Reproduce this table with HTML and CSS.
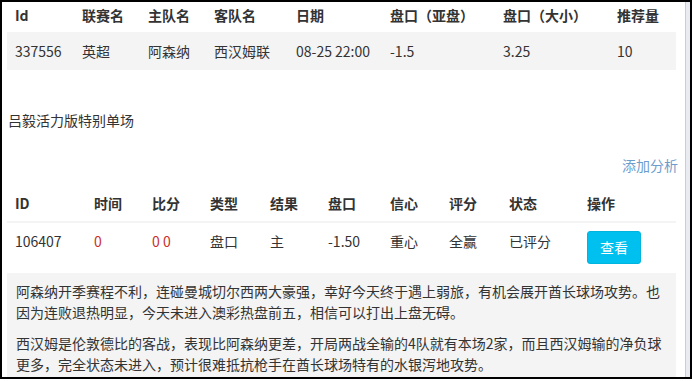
FILE: index.html
```html
<!DOCTYPE html>
<html lang="zh-CN">
<head>
<meta charset="utf-8">
<title>单场推荐</title>
<link rel="stylesheet" href="styles.css">
</head>
<body>
<div class="window">
  <div class="page">
    <table class="tbl tbl-match">
      <colgroup>
        <col class="w67"><col class="w66"><col class="w66"><col class="w82">
        <col class="w94"><col class="w113"><col class="w114"><col class="w67">
      </colgroup>
      <thead>
        <tr><th>Id</th><th>联赛名</th><th>主队名</th><th>客队名</th><th>日期</th><th>盘口（亚盘）</th><th>盘口（大小）</th><th>推荐量</th></tr>
      </thead>
      <tbody>
        <tr><td>337556</td><td>英超</td><td>阿森纳</td><td>西汉姆联</td><td>08-25 22:00</td><td>-1.5</td><td>3.25</td><td>10</td></tr>
      </tbody>
    </table>

    <div class="title">吕毅活力版特别单场</div>
    <div class="actions"><a class="link" href="#">添加分析</a></div>

    <table class="tbl tbl-analysis">
      <colgroup>
        <col class="w79"><col class="w58"><col class="w58"><col class="w60"><col class="w58">
        <col class="w62"><col class="w59"><col class="w60"><col class="w78"><col class="w97">
      </colgroup>
      <thead>
        <tr><th>ID</th><th>时间</th><th>比分</th><th>类型</th><th>结果</th><th>盘口</th><th>信心</th><th>评分</th><th>状态</th><th>操作</th></tr>
      </thead>
      <tbody>
        <tr><td>106407</td><td class="red">0</td><td class="red">0 0</td><td>盘口</td><td>主</td><td>-1.50</td><td>重心</td><td>全赢</td><td>已评分</td><td><a class="btn" href="#">查看</a></td></tr>
      </tbody>
    </table>

    <div class="note">
      <p>阿森纳开季赛程不利，连碰曼城切尔西两大豪强，幸好今天终于遇上弱旅，有机会展开酋长球场攻势。也因为连败退热明显，今天未进入澳彩热盘前五，相信可以打出上盘无碍。</p>
      <p>西汉姆是伦敦德比的客战，表现比阿森纳更差，开局两战全输的4队就有本场2家，而且西汉姆输的净负球更多，完全状态未进入，预计很难抵抗枪手在酋长球场特有的水银泻地攻势。</p>
    </div>
  </div>
  <div class="scrollbar"></div>
</div>
</body>
</html>
```

FILE: styles.css
```css
* { box-sizing: border-box; }
html, body { margin: 0; padding: 0; background: #fff; }
body {
  font-family: "Noto Sans CJK SC", "Noto Sans", sans-serif;
  font-size: 14px;
  color: #333;
  width: 692px;
  height: 381px;
  overflow: hidden;
}
.window {
  display: flex;
  width: 692px;
  height: 379px;
  border: 2px solid #000;
}
.page {
  width: 683px;
  height: 375px;
  overflow: hidden;
  padding: 0 8px 0 5px;
  background: #fff;
}
.scrollbar {
  width: 5px;
  height: 375px;
  border-left: 1px solid #c9ccd2;
  background: #e8ebf1;
}
.tbl {
  width: 669px;
  table-layout: fixed;
  border-collapse: collapse;
  line-height: 20px;
}
.tbl th, .tbl td {
  text-align: left;
  white-space: nowrap;
  vertical-align: top;
}
.tbl th { font-weight: bold; color: #333; }
.w58 { width: 58px; } .w59 { width: 59px; } .w60 { width: 60px; } .w62 { width: 62px; }
.w66 { width: 66px; } .w67 { width: 67px; } .w78 { width: 78px; } .w79 { width: 79px; }
.w82 { width: 82px; } .w94 { width: 94px; } .w97 { width: 97px; } .w113 { width: 113px; }
.w114 { width: 114px; }

.tbl-match th { padding: 3px 8px 7px; }
.tbl-match td { padding: 9px 8px; background: #f4f4f4; }

.title {
  margin-top: 40px;
  line-height: 20px;
  padding-left: 1px;
}
.actions {
  margin-top: 25px;
  text-align: right;
  line-height: 20px;
  margin-right: -1px;
}
.link { color: #6d9dcc; text-decoration: none; }

.tbl-analysis { margin-top: 10px; }
.tbl-analysis th { padding: 8px 8px; border-bottom: 2px solid #f4f4f4; }
.tbl-analysis td { padding: 8px 8px; }
.red { color: #c9302c; }
.btn {
  display: inline-block;
  width: 54px;
  height: 33px;
  line-height: 31px;
  text-align: center;
  color: #fff;
  background: #00c0ef;
  border: 1px solid #00b4e0;
  border-radius: 3px;
  text-decoration: none;
}

.note {
  margin-top: 1px;
  width: 669px;
  background: #f4f4f4;
  padding: 8px 9px;
  line-height: 21px;
}
.note p { margin: 0 0 10px; }
```
